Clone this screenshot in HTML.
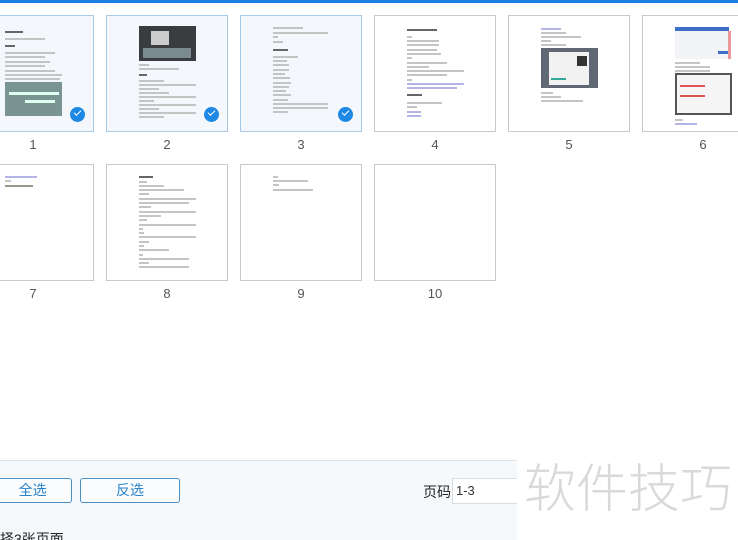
<!DOCTYPE html>
<html><head><meta charset="utf-8"><style>
*{margin:0;padding:0;box-sizing:border-box}
html,body{width:738px;height:540px;overflow:hidden}
body{background:#fff;position:relative;font-family:"Liberation Sans","Noto Sans CJK SC",sans-serif}
.bar{position:absolute;left:0;top:0;width:738px;height:3px;background:#1a7fe0}
.card{position:absolute;width:122px;height:117px;border:1px solid #c9c9c9;background:#fff;overflow:hidden}
.sel{border-color:#a6cbe8;background:#f4f8fc}
.lbl{position:absolute;width:122px;text-align:center;font-size:13px;color:#555}
.l{position:absolute;height:1.5px;background:#c4c4c4}
.h{height:2px;background:#666}
.b{background:#b4b4e6}
.chk{position:absolute;left:97px;top:91px;width:15px;height:15px;border-radius:50%;background:#1e88e5}
.chk:after{content:"";position:absolute;left:4px;top:3px;width:6px;height:3px;border-left:1.5px solid #fff;border-bottom:1.5px solid #fff;transform:rotate(-45deg)}
.foot{position:absolute;left:0;top:460px;width:517px;height:80px;background:#f6f9fc;border-top:1px solid #dde3ea}
.btn{position:absolute;top:478px;height:25px;border:1px solid #4a90c0;border-radius:3px;background:#fafcfe;color:#2a82c8;font-size:14px;text-align:center;line-height:23px}
</style></head><body>
<div class="bar"></div>

<div class="card sel" style="left:-28px;top:15px">
<div class="l h" style="left:32px;top:15px;width:18px"></div>
<div class="l" style="left:32px;top:22px;width:40px"></div>
<div class="l h" style="left:32px;top:29px;width:10px;height:1.5px"></div>
<div class="l" style="left:32px;top:36px;width:50px"></div>
<div class="l" style="left:32px;top:40px;width:40px"></div>
<div class="l" style="left:32px;top:45px;width:45px"></div>
<div class="l" style="left:32px;top:49px;width:40px"></div>
<div class="l" style="left:32px;top:54px;width:50px"></div>
<div class="l" style="left:32px;top:58px;width:57px"></div>
<div class="l" style="left:32px;top:62px;width:55px"></div>
<div style="position:absolute;left:32px;top:66px;width:57px;height:34px;background:#7a9494"><div style="position:absolute;left:4px;top:10px;width:50px;height:3px;background:#dfe"></div><div style="position:absolute;left:20px;top:18px;width:30px;height:3px;background:#dfe"></div></div>
<div class="chk"></div>
</div>
<div class="lbl" style="left:-28px;top:137px">1</div>

<div class="card sel" style="left:106px;top:15px">
<div style="position:absolute;left:32px;top:10px;width:57px;height:35px;background:#3a3d40"><div style="position:absolute;left:12px;top:5px;width:18px;height:14px;background:#ccc"></div><div style="position:absolute;left:4px;top:22px;width:48px;height:10px;background:#7a8a90"></div></div>
<div class="l" style="left:32px;top:48px;width:10px"></div>
<div class="l" style="left:32px;top:52px;width:40px"></div>
<div class="l h" style="left:32px;top:58px;width:8px;height:1.5px"></div>
<div class="l" style="left:32px;top:64px;width:25px"></div>
<div class="l" style="left:32px;top:68px;width:57px"></div>
<div class="l" style="left:32px;top:72px;width:20px"></div>
<div class="l" style="left:32px;top:76px;width:30px"></div>
<div class="l" style="left:32px;top:80px;width:57px"></div>
<div class="l" style="left:32px;top:84px;width:15px"></div>
<div class="l" style="left:32px;top:88px;width:57px"></div>
<div class="l" style="left:32px;top:92px;width:20px"></div>
<div class="l" style="left:32px;top:96px;width:57px"></div>
<div class="l" style="left:32px;top:100px;width:25px"></div>
<div class="chk"></div>
</div>
<div class="lbl" style="left:106px;top:137px">2</div>

<div class="card sel" style="left:240px;top:15px">
<div class="l" style="left:32px;top:11px;width:30px"></div>
<div class="l" style="left:32px;top:16px;width:55px"></div>
<div class="l" style="left:32px;top:20px;width:5px"></div>
<div class="l" style="left:32px;top:25px;width:10px"></div>
<div class="l h" style="left:32px;top:33px;width:15px"></div>
<div class="l" style="left:32px;top:40px;width:25px"></div>
<div class="l" style="left:32px;top:44px;width:14px"></div>
<div class="l" style="left:32px;top:48px;width:16px"></div>
<div class="l" style="left:32px;top:53px;width:16px"></div>
<div class="l" style="left:32px;top:57px;width:12px"></div>
<div class="l" style="left:32px;top:61px;width:17px"></div>
<div class="l" style="left:32px;top:66px;width:18px"></div>
<div class="l" style="left:32px;top:70px;width:16px"></div>
<div class="l" style="left:32px;top:74px;width:13px"></div>
<div class="l" style="left:32px;top:78px;width:18px"></div>
<div class="l" style="left:32px;top:83px;width:15px"></div>
<div class="l" style="left:32px;top:87px;width:55px"></div>
<div class="l" style="left:32px;top:91px;width:55px"></div>
<div class="l" style="left:32px;top:95px;width:15px"></div>
<div class="chk"></div>
</div>
<div class="lbl" style="left:240px;top:137px">3</div>

<div class="card" style="left:374px;top:15px">
<div class="l h" style="left:32px;top:13px;width:30px"></div>
<div class="l" style="left:32px;top:20px;width:5px"></div>
<div class="l" style="left:32px;top:24px;width:32px"></div>
<div class="l" style="left:32px;top:28px;width:32px"></div>
<div class="l" style="left:32px;top:33px;width:30px"></div>
<div class="l" style="left:32px;top:37px;width:34px"></div>
<div class="l" style="left:32px;top:41px;width:5px"></div>
<div class="l" style="left:32px;top:46px;width:40px"></div>
<div class="l" style="left:32px;top:50px;width:22px"></div>
<div class="l" style="left:32px;top:54px;width:57px"></div>
<div class="l" style="left:32px;top:58px;width:40px"></div>
<div class="l" style="left:32px;top:63px;width:5px"></div>
<div class="l b" style="left:32px;top:67px;width:57px"></div>
<div class="l b" style="left:32px;top:71px;width:50px"></div>
<div class="l h" style="left:32px;top:78px;width:15px"></div>
<div class="l" style="left:32px;top:86px;width:35px"></div>
<div class="l" style="left:32px;top:90px;width:10px"></div>
<div class="l b" style="left:32px;top:95px;width:14px"></div>
<div class="l b" style="left:32px;top:99px;width:14px"></div>
</div>
<div class="lbl" style="left:374px;top:137px">4</div>

<div class="card" style="left:508px;top:15px">
<div class="l b" style="left:32px;top:12px;width:20px"></div>
<div class="l" style="left:32px;top:16px;width:25px"></div>
<div class="l" style="left:32px;top:20px;width:40px"></div>
<div class="l" style="left:32px;top:24px;width:10px"></div>
<div class="l" style="left:32px;top:28px;width:25px"></div>
<div style="position:absolute;left:32px;top:32px;width:57px;height:40px;background:#5f6873"><div style="position:absolute;left:8px;top:4px;width:40px;height:33px;background:#f2f2f2"></div><div style="position:absolute;left:36px;top:8px;width:10px;height:10px;background:#333"></div><div style="position:absolute;left:10px;top:30px;width:15px;height:2px;background:#3a9"></div></div>
<div class="l" style="left:32px;top:76px;width:12px"></div>
<div class="l" style="left:32px;top:80px;width:20px"></div>
<div class="l" style="left:32px;top:84px;width:42px"></div>
</div>
<div class="lbl" style="left:508px;top:137px">5</div>

<div class="card" style="left:642px;top:15px">
<div style="position:absolute;left:32px;top:11px;width:54px;height:32px;background:#f2f4f8;border-top:4px solid #3e6fc8"><div style="position:absolute;left:43px;top:20px;width:10px;height:3px;background:#3e6fc8"></div></div>
<div style="position:absolute;left:85px;top:15px;width:3px;height:28px;background:#e99"></div>
<div class="l" style="left:32px;top:46px;width:25px"></div>
<div class="l" style="left:32px;top:50px;width:35px"></div>
<div class="l" style="left:32px;top:54px;width:35px"></div>
<div style="position:absolute;left:32px;top:57px;width:57px;height:42px;border:2px solid #555;background:#f5f5f5"><div style="position:absolute;left:3px;top:10px;width:25px;height:2px;background:#d55"></div><div style="position:absolute;left:3px;top:20px;width:25px;height:2px;background:#d55"></div></div>
<div class="l" style="left:32px;top:103px;width:8px"></div>
<div class="l b" style="left:32px;top:107px;width:22px"></div>
</div>
<div class="lbl" style="left:642px;top:137px">6</div>

<div class="card" style="left:-28px;top:164px">
<div class="l b" style="left:32px;top:11px;width:32px"></div>
<div class="l" style="left:32px;top:15px;width:6px"></div>
<div class="l" style="left:32px;top:20px;width:28px;background:#998"></div>
</div>
<div class="lbl" style="left:-28px;top:286px">7</div>

<div class="card" style="left:106px;top:164px">
<div class="l h" style="left:32px;top:11px;width:14px;height:1.5px"></div>
<div class="l" style="left:32px;top:16px;width:8px"></div>
<div class="l" style="left:32px;top:20px;width:25px"></div>
<div class="l" style="left:32px;top:24px;width:45px"></div>
<div class="l" style="left:32px;top:28px;width:10px"></div>
<div class="l" style="left:32px;top:33px;width:57px"></div>
<div class="l" style="left:32px;top:37px;width:50px"></div>
<div class="l" style="left:32px;top:41px;width:12px"></div>
<div class="l" style="left:32px;top:46px;width:57px"></div>
<div class="l" style="left:32px;top:50px;width:22px"></div>
<div class="l" style="left:32px;top:54px;width:8px"></div>
<div class="l" style="left:32px;top:59px;width:57px"></div>
<div class="l" style="left:32px;top:63px;width:4px"></div>
<div class="l" style="left:32px;top:67px;width:5px"></div>
<div class="l" style="left:32px;top:71px;width:57px"></div>
<div class="l" style="left:32px;top:76px;width:10px"></div>
<div class="l" style="left:32px;top:80px;width:5px"></div>
<div class="l" style="left:32px;top:84px;width:30px"></div>
<div class="l" style="left:32px;top:89px;width:4px"></div>
<div class="l" style="left:32px;top:93px;width:50px"></div>
<div class="l" style="left:32px;top:97px;width:10px"></div>
<div class="l" style="left:32px;top:101px;width:50px"></div>
</div>
<div class="lbl" style="left:106px;top:286px">8</div>

<div class="card" style="left:240px;top:164px">
<div class="l" style="left:32px;top:11px;width:5px"></div>
<div class="l" style="left:32px;top:15px;width:35px"></div>
<div class="l" style="left:32px;top:19px;width:6px"></div>
<div class="l" style="left:32px;top:24px;width:40px"></div>
</div>
<div class="lbl" style="left:240px;top:286px">9</div>

<div class="card" style="left:374px;top:164px"></div>
<div class="lbl" style="left:374px;top:286px">10</div>

<div class="foot"></div>
<div class="btn" style="left:-30px;width:102px">&nbsp;&nbsp;&nbsp;&nbsp;&nbsp;&nbsp;全选</div>
<div class="btn" style="left:80px;width:100px">反选</div>
<div style="position:absolute;left:423px;top:482px;font-size:14px;color:#222">页码</div>
<div style="position:absolute;left:452px;top:478px;width:70px;height:26px;background:#fff;border:1px solid #ddd;font-size:13px;line-height:24px;padding-left:3px;color:#333">1-3</div>
<div style="position:absolute;left:0;top:531px;font-size:14px;color:#222;line-height:16px;white-space:nowrap">择3张页面</div>
<div style="position:absolute;left:517px;top:452px;width:221px;height:88px;background:#fff"></div>
<div style="position:absolute;left:524px;top:450px;width:230px;white-space:nowrap;font-size:52px;color:#d9d9d9;letter-spacing:0;font-family:'Noto Sans CJK SC',sans-serif;font-weight:300;line-height:70px">软件技巧</div>
</body></html>
